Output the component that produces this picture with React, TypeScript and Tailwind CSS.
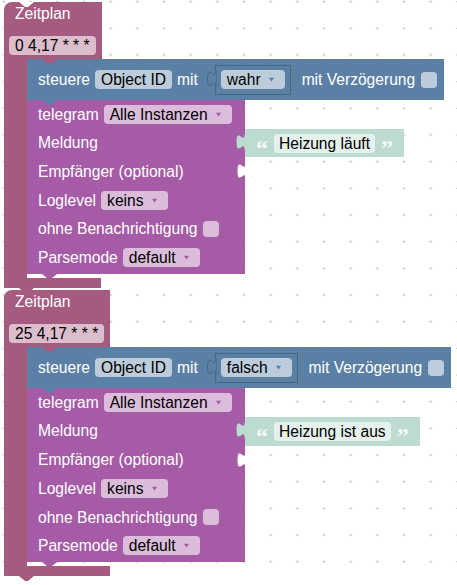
import React from "react";

const MAUVE = "#a55b80";
const PURPLE = "#a55ba5";
const BLUE = "#5b80a5";
const GREEN = "#bddbd1";

function Arrow({ color }: { color: string }) {
  return (
    <svg width="7" height="5" viewBox="0 0 7 5" className="ml-[7px] shrink-0">
      <path d="M0.8 0.8 L6.2 0.8 L3.5 4.4 Z" fill={color} />
    </svg>
  );
}

function Pill({
  children,
  arrow,
}: {
  children: React.ReactNode;
  arrow?: string;
}) {
  return (
    <div
      className={
        arrow
          ? "flex h-[19px] shrink-0 items-center whitespace-pre rounded-[4px] bg-white/60 pl-[6px] pr-[10px] leading-[19px] text-black"
          : "flex h-[19px] shrink-0 items-center whitespace-pre rounded-[4px] bg-white/60 px-[6px] leading-[19px] text-black"
      }
    >
      <span>{children}</span>
      {arrow && <Arrow color={arrow} />}
    </div>
  );
}

function Check() {
  return <div className="h-[16px] w-[16px] shrink-0 rounded-[4px] bg-white/60" />;
}

function Notch({ color, className }: { color: string; className: string }) {
  return (
    <svg width="15" height="5" viewBox="0 0 15 5" className={className}>
      <path d="M0 0 L6 5 L9 5 L15 0 Z" fill={color} />
    </svg>
  );
}

function Tab({ color, className, stroke }: { color: string; className: string; stroke?: string }) {
  return (
    <svg width="11" height="17" viewBox="0 0 11 17" className={className}>
      <path
        d="M9.5 0.5 c0 10 -8 -8 -8 7.5 s8 -2.5 8 7.5 L11 15.5 L11 0.5 Z"
        fill={color}
        stroke={stroke ?? "none"}
        strokeWidth="1"
      />
    </svg>
  );
}

function TextBlock({ text }: { text: string }) {
  return (
    <div className="relative flex h-full items-center bg-[#bddbd1] pl-[11px] pr-[13px]">
      <Tab color={GREEN} className="absolute left-[-10px] top-[5px]" />
      <span className="w-[10px] translate-y-[5px] font-['Liberation_Serif',serif] text-[24px] font-bold leading-none text-white/85">
        “
      </span>
      <div className="ml-[8px]">
        <div className="flex h-[19px] items-center whitespace-pre rounded-[4px] bg-white/60 px-[5px] leading-[19px] text-black">
          {text}
        </div>
      </div>
      <span className="ml-[6px] w-[10px] translate-y-[5px] font-['Liberation_Serif',serif] text-[24px] font-bold leading-none text-white/85">
        ”
      </span>
    </div>
  );
}

function PRow({
  children,
  attach,
  socket,
}: {
  children: React.ReactNode;
  attach?: React.ReactNode;
  socket?: boolean;
}) {
  return (
    <div className="flex h-[28.7px]">
      <div className="relative flex w-[218px] items-center gap-[5px] bg-[#a55ba5] pl-[11px] text-white">
        {children}
        {socket && <Tab color="#ffffff" className="absolute right-[-2px] top-[6px]" />}
      </div>
      {attach}
    </div>
  );
}

function Inner({ value, message }: { value: string; message: string }) {
  return (
    <div className="flex flex-col items-start">
      {/* steuere block */}
      <div className="relative flex h-[41px] items-center bg-[#5b80a5] pl-[11px] pr-[7px] text-white">
        <Notch color={MAUVE} className="absolute left-[15px] top-0" />
        <span className="whitespace-pre">steuere</span>
        <div className="ml-[5px]">
          <Pill>Object ID</Pill>
        </div>
        <span className="ml-[5px]">mit</span>
        <div className="relative ml-[17px] flex h-[30px] items-center border border-[#48657f] pl-[5px] pr-[5px]">
          <Tab color={BLUE} stroke="#48657f" className="absolute left-[-10px] top-[5px]" />
          <Pill arrow={BLUE}>{value}</Pill>
        </div>
        <span className="ml-[11px] whitespace-pre">mit Verzögerung</span>
        <div className="ml-[6px]">
          <Check />
        </div>
      </div>
      {/* telegram block */}
      <div className="relative flex flex-col">
        <Notch color={BLUE} className="absolute left-[15px] top-0 z-10" />
        <PRow>
          <span>telegram</span>
          <Pill arrow={PURPLE}>Alle Instanzen</Pill>
        </PRow>
        <PRow attach={<TextBlock text={message} />}>
          <span>Meldung</span>
        </PRow>
        <PRow socket>
          <span className="whitespace-pre">Empfänger (optional)</span>
        </PRow>
        <PRow>
          <span>Loglevel</span>
          <Pill arrow={PURPLE}>keins</Pill>
        </PRow>
        <PRow>
          <span className="whitespace-pre">ohne Benachrichtigung</span>
          <Check />
        </PRow>
        <PRow>
          <span>Parsemode</span>
          <Pill arrow={PURPLE}>default</Pill>
        </PRow>
        <div className="relative h-[2px] w-[218px] bg-[#a55ba5]">
          <Notch color={PURPLE} className="absolute left-[15px] top-[2px]" />
        </div>
      </div>
    </div>
  );
}

function Zeitplan({
  cron,
  value,
  message,
  armW,
  first,
}: {
  cron: string;
  value: string;
  message: string;
  armW: string;
  first?: boolean;
}) {
  return (
    <div className="flex flex-col items-start">
      <div className="relative w-fit rounded-tl-[8px] bg-[#a55b80] pb-[4px] pl-[5px] pr-[6px] pt-[3px] text-white">
        {first && <Notch color="#ffffff" className="absolute left-[15px] top-0" />}
        <div className="h-[18px] pl-[6px] leading-[18px]">Zeitplan</div>
        <div className="mt-[13px]">
          <Pill>{cron}</Pill>
        </div>
      </div>
      <div className="flex">
        <div className="w-[23px] bg-[#a55b80]" />
        <div className="flex flex-col">
          <Inner value={value} message={message} />
          <div className="h-[4px]" />
        </div>
      </div>
      <div className={"relative h-[10px] bg-[#a55b80] " + armW}>
        <Notch color={MAUVE} className="absolute left-[15px] top-[10px] z-10" />
      </div>
    </div>
  );
}

export default function App() {
  return (
    <div className="relative h-[585px] w-[457px] overflow-hidden bg-white font-['Liberation_Sans',Arial,sans-serif] text-[15.6px]">
      <svg className="absolute left-0 top-0" width="457" height="585">
        <defs>
          <pattern
            id="grid"
            width="26.67"
            height="26.67"
            patternUnits="userSpaceOnUse"
            x="2.5"
            y="0.2"
          >
            <path d="M0 1.5 H3 M1.5 0 V3" stroke="#cfcfcf" strokeWidth="1" />
          </pattern>
        </defs>
        <rect width="457" height="585" fill="url(#grid)" />
      </svg>
      <div className="relative flex flex-col gap-[2px] pl-[4px] pt-[2px]">
        <Zeitplan cron="0 4,17 * * *" value="wahr" message="Heizung läuft" armW="w-[97px]" first />
        <Zeitplan cron="25 4,17 * * *" value="falsch" message="Heizung ist aus" armW="w-[106px]" />
      </div>
    </div>
  );
}
